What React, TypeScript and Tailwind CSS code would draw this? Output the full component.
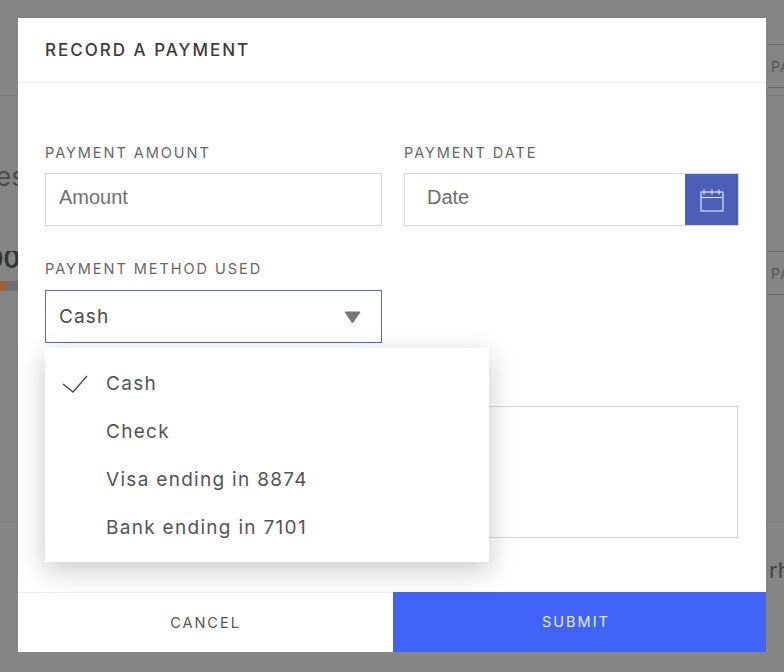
const FONT = "font-['Inter',sans-serif]";

const METHODS = ['Cash', 'Check', 'Visa ending in 8874', 'Bank ending in 7101'];

function CalendarIcon() {
  return (
    <svg width="26" height="26" viewBox="0 0 26 26" fill="none" stroke="#dfe4f5" strokeWidth="1.2">
      <rect x="2" y="5" width="22" height="19" />
      <path d="M2 10.5h22M5 2.5v5M13 2.5v5M20 2.5v5" />
    </svg>
  );
}

function Label({ children }: { children: string }) {
  return (
    <label className="block h-[22px] pt-[1px] text-[14.5px] leading-[22px] tracking-[1.95px] text-[#666]">
      {children}
    </label>
  );
}

function BackgroundPage() {
  return (
    <div className={`${FONT} h-full text-[#444]`}>
      <div className="h-[96px] border-b border-[#7f7f7f] pt-[44px]">
        <div className="ml-auto flex h-[44px] w-[16px] items-center overflow-hidden border-y border-[#666] pl-[3px] text-[14px] tracking-[1px] whitespace-nowrap text-[#555]">
          PAY
        </div>
      </div>
      <div className="h-[155px] pt-[65px]">
        <div className="h-[32px] text-[26px] leading-[32px]">
          <span className="ml-[-4px] text-[#4c4c4c]">es</span>
        </div>
      </div>
      <div className="flex h-[271px] border-b border-[#7f7f7f]">
        <div className="w-[18px] overflow-hidden">
          <div className="ml-[-13px] mt-[-9px] text-[25px] leading-[34px] font-semibold whitespace-nowrap text-[#333]">00</div>
          <div className="mt-[5px] flex h-[10px] bg-[#6f6f6f]">
            <div className="h-[10px] w-[6px] rounded-r-full bg-[#b0592a]" />
          </div>
        </div>
        <div className="ml-auto flex h-[44px] w-[16px] items-center self-start overflow-hidden border-y border-[#666] pl-[3px] text-[14px] tracking-[1px] whitespace-nowrap text-[#555]">
          PAY
        </div>
      </div>
      <div className="flex h-[95px] justify-end pt-[34px]">
        <div className="w-[14px] overflow-hidden text-[22px] leading-[28px] whitespace-nowrap text-[#444]">
          <span className="ml-[-1px]">rh</span>
        </div>
      </div>
      <div className="flex h-[28px] items-center pt-[3px] text-[21px] leading-[28px]">
        <span className="ml-[32px] w-[249px] font-semibold text-[#333]">$100.00</span>
        <span className="w-[387px] text-[#444]">Check</span>
        <span>-</span>
      </div>
    </div>
  );
}

export default function App() {
  return (
    <div className="relative h-[672px] w-[784px] overflow-hidden bg-[#858585]">
      <BackgroundPage />

      <div className={`${FONT} absolute top-[18px] left-[18px] flex h-[634px] w-[748px] flex-col bg-white`}>
        <div className="flex h-[65px] shrink-0 items-center border-b border-[#eeeeee] px-[27px]">
          <h2 className="pt-[2px] text-[17px] font-medium tracking-[2px] text-[#3b3b3b]">RECORD A PAYMENT</h2>
        </div>

        <div className="relative flex-1 px-[27px] pt-[58px]">
          <div className="grid grid-cols-[337px_335px] gap-x-[22px]">
            <div>
              <Label>PAYMENT AMOUNT</Label>
              <div className="mt-[10px] flex h-[53px] items-center border border-[#d8d8d8] pb-[5px] pl-[13px] font-['Liberation_Sans',sans-serif] text-[20px] text-[#6f6f6f]">
                Amount
              </div>
            </div>
            <div>
              <Label>PAYMENT DATE</Label>
              <div className="mt-[10px] flex h-[53px] items-stretch border border-[#d8d8d8] font-['Liberation_Sans',sans-serif] text-[20px] text-[#6f6f6f]">
                <div className="flex flex-1 items-center pb-[5px] pl-[22px]">Date</div>
                <div className="flex w-[53px] items-center justify-center bg-[#4a5fb5]">
                  <CalendarIcon />
                </div>
              </div>
            </div>
          </div>

          <div className="mt-[31px] w-[337px]">
            <Label>PAYMENT METHOD USED</Label>
            <div className="mt-[11px] flex h-[53px] items-center justify-between border border-[#4b68f8] pt-[1px] pr-[20px] pl-[13px] text-[19px] tracking-[1.1px] text-[#4a4a4a]">
              <span>Cash</span>
              <svg width="17" height="13" viewBox="0 0 17 13" fill="#777" stroke="#777" strokeLinejoin="round">
                <path d="M1 1h15L8.5 12z" />
              </svg>
            </div>
          </div>

          <div className="mt-[63px] h-[132px] w-[693px] border border-[#d4d4d4]" />

          <div className="absolute top-[265px] left-[27px] flex h-[214px] w-[444px] flex-col justify-center bg-white pt-[2px] shadow-[0_8px_26px_rgba(0,0,0,0.22)]">
            {METHODS.map((method, index) => (
              <div key={method} className="flex h-[48px] items-center text-[19px] tracking-[1.3px] text-[#51545c]">
                <span className="flex w-[61px] justify-end pr-[18px]">
                  {index === 0 && (
                    <svg width="26" height="18" viewBox="0 0 26 18" fill="none" stroke="#44464c" strokeWidth="1.3">
                      <path d="M1 9l10 8L25 1" />
                    </svg>
                  )}
                </span>
                {method}
              </div>
            ))}
          </div>
        </div>

        <div className="grid h-[60px] shrink-0 grid-cols-[375px_373px] text-[14.5px] tracking-[2px]">
          <button type="button" className="border-t border-[#eeeeee] text-[#555]">CANCEL</button>
          <button type="button" className="bg-[#4263f7] pr-[7px] text-[#e8ecff]">SUBMIT</button>
        </div>
      </div>
    </div>
  );
}
